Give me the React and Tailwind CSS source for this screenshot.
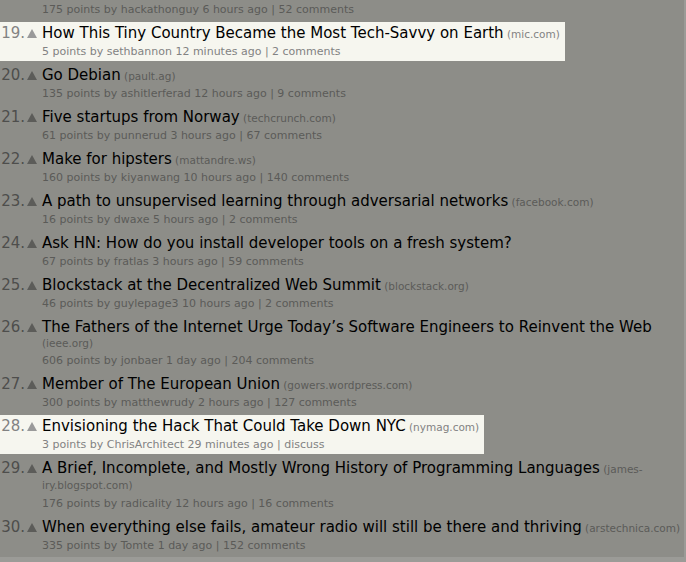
import React from "react";

const items = [
  { rank: 19, title: "How This Tiny Country Became the Most Tech-Savvy on Earth", domain: "mic.com", sub: "5 points by sethbannon 12 minutes ago | 2 comments", hl: true },
  { rank: 20, title: "Go Debian", domain: "pault.ag", sub: "135 points by ashitlerferad 12 hours ago | 9 comments" },
  { rank: 21, title: "Five startups from Norway", domain: "techcrunch.com", sub: "61 points by punnerud 3 hours ago | 67 comments" },
  { rank: 22, title: "Make for hipsters", domain: "mattandre.ws", sub: "160 points by kiyanwang 10 hours ago | 140 comments" },
  { rank: 23, title: "A path to unsupervised learning through adversarial networks", domain: "facebook.com", sub: "16 points by dwaxe 5 hours ago | 2 comments" },
  { rank: 24, title: "Ask HN: How do you install developer tools on a fresh system?", sub: "67 points by fratlas 3 hours ago | 59 comments" },
  { rank: 25, title: "Blockstack at the Decentralized Web Summit", domain: "blockstack.org", sub: "46 points by guylepage3 10 hours ago | 2 comments" },
  { rank: 26, title: "The Fathers of the Internet Urge Today\u2019s Software Engineers to Reinvent the Web", cont: "(ieee.org)", contLead: "leading-[15px]", sub: "606 points by jonbaer 1 day ago | 204 comments" },
  { rank: 27, title: "Member of The European Union", domain: "gowers.wordpress.com", sub: "300 points by matthewrudy 2 hours ago | 127 comments" },
  { rank: 28, title: "Envisioning the Hack That Could Take Down NYC", domain: "nymag.com", sub: "3 points by ChrisArchitect 29 minutes ago | discuss", hl: true },
  { rank: 29, title: "A Brief, Incomplete, and Mostly Wrong History of Programming Languages", domainRaw: "(james-", cont: "iry.blogspot.com)", contLead: "leading-[17px]", sub: "176 points by radicality 12 hours ago | 16 comments" },
  { rank: 30, title: "When everything else fails, amateur radio will still be there and thriving", domain: "arstechnica.com", sub: "335 points by Tomte 1 day ago | 152 comments" },
];

function Arrow({ hl }) {
  return (
    <svg width="10" height="9" viewBox="0 0 10 9" className="block">
      <polygon points="5,0 10,9 0,9" fill={hl ? "#9a9a9a" : "#5c5c59"} />
    </svg>
  );
}

function Item({ it }) {
  const dim = it.hl ? "text-[#828282]" : "text-[#5b5b58]";
  return (
    <div className={it.hl ? "flex w-fit bg-[#f6f6ef] pt-[2px] pr-[5px]" : "flex w-fit pt-[2px] pr-[5px]"}>
      <div className={it.hl ? "w-[25px] text-right text-[15px] leading-[18px] text-[#828282]" : "w-[25px] text-right text-[15px] leading-[18px] text-[#4e4e4c]"}>{it.rank}.</div>
      <div className="w-[17px] pt-[5px] pl-[2px]">
        <Arrow hl={it.hl} />
      </div>
      <div className="flex flex-col">
        <div className="h-[18px] whitespace-nowrap text-[15px] leading-[18px] text-black">
          {it.title}
          {it.domain && <span className={"text-[10.5px] leading-none " + dim}> ({it.domain})</span>}
          {it.domainRaw && <span className={"text-[10.5px] leading-none " + dim}> {it.domainRaw}</span>}
        </div>
        {it.cont && <div className={"whitespace-nowrap text-[10.5px] " + it.contLead + " " + dim}>{it.cont}</div>}
        <div className={"mt-px h-[18px] whitespace-nowrap text-[11px] leading-[18px] " + dim}>{it.sub}</div>
      </div>
    </div>
  );
}

export default function App() {
  return (
    <div className="flex h-[562px] w-[686px] flex-col overflow-hidden bg-[#8d8d88] font-['DejaVu_Sans',sans-serif]">
      <div className="flex flex-1 flex-col gap-[3px] overflow-hidden border-r-2 border-[#9b9b97]">
        <div className="h-[19px] pt-[1px] pl-[42px] whitespace-nowrap text-[11px] leading-[18px] text-[#5b5b58]">
          175 points by hackathonguy 6 hours ago | 52 comments
        </div>
        {items.map((it) => (
          <Item key={it.rank} it={it} />
        ))}
      </div>
      <div className="h-[5px] bg-[#9b9b97]" />
    </div>
  );
}
